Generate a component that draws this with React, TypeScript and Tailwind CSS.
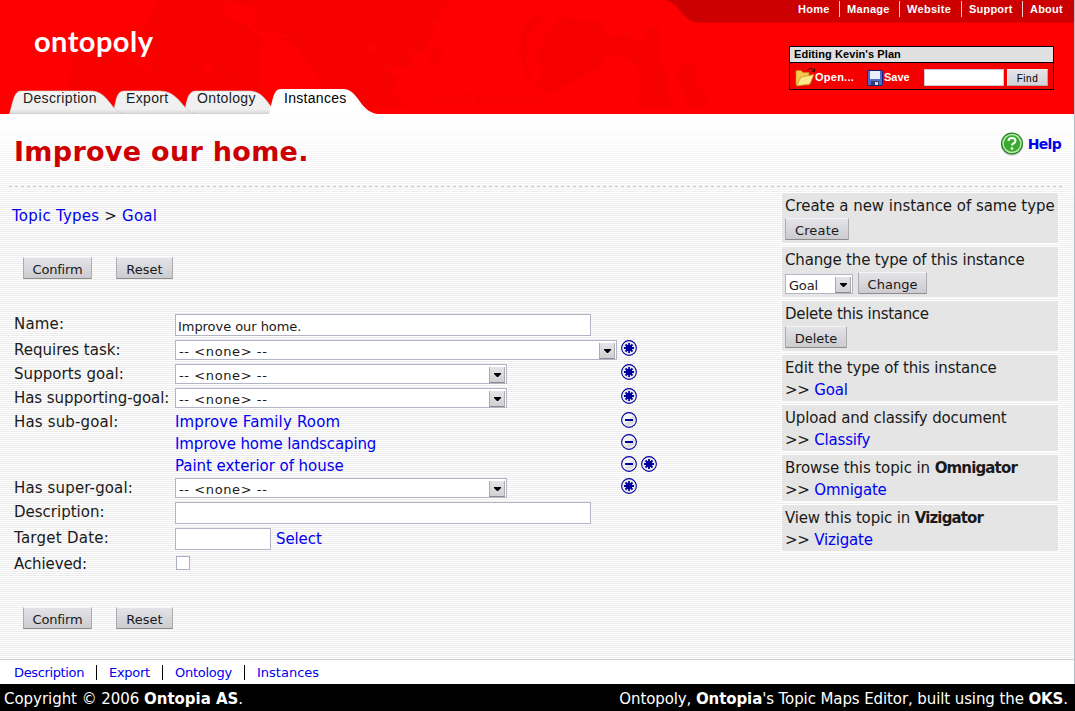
import React from "react";

const blue = "text-[#0000ee]";

function Star() {
  return (
    <svg width="16" height="16" viewBox="0 0 16 16" className="shrink-0 bg-white/60">
      <circle cx="8" cy="8" r="7.4" fill="#ececec" stroke="#00009c" strokeWidth="1.1" />
      <path d="M8 3v10M3 8h10M4.500 4.500l7 7M11.500 4.500l-7 7" stroke="#00009c" strokeWidth="1.8" />
      <circle cx="8" cy="8" r="3.2" fill="#00009c" />
    </svg>
  );
}

function Minus() {
  return (
    <svg width="16" height="16" viewBox="0 0 16 16" className="shrink-0">
      <circle cx="8" cy="8" r="7.4" fill="#f4f4f4" stroke="#00009c" strokeWidth="1.1" />
      <path d="M3.500 12.500L12.500 3.500A6.500 6.500 0 0 1 3.500 12.500Z" fill="#dddddd" />
      <rect x="4" y="7" width="8" height="2" fill="#00009c" />
    </svg>
  );
}

function Btn({ children, className }: { children: string; className: string }) {
  return (
    <button className={`shrink-0 h-[22px] border-x border-b border-t border-x-[#acacac] border-b-[#8c8c8c] border-t-[#f4f4f6] bg-linear-to-b from-[#e3e3e8] to-[#cbcbd0] text-[13px] leading-[22px] pt-px text-center whitespace-nowrap ${className}`}>
      {children}
    </button>
  );
}

function Select({ value, className }: { value: string; className: string }) {
  return (
    <div className={`flex h-5 shrink-0 items-start border border-[#b1b5c6] bg-white text-[13px] ${className}`}>
      <span className="grow pl-[3px] leading-[20px] pt-px">{value}</span>
      <span className="mt-[2px] mr-px flex h-4 w-4 items-center justify-center border-x border-b border-x-[#acacac] border-b-[#8c8c8c] bg-linear-to-b from-[#e3e3e8] to-[#d0d0d5]">
        <svg width="7" height="4" viewBox="0 0 7 4" className="mt-px"><path d="M0 0h7v1L4 4h-1L0 1z" fill="#000" /></svg>
      </span>
    </div>
  );
}

function Row({ label, h, children, track = "tracking-normal" }: { label: string; h: string; track?: string; children?: React.ReactNode }) {
  return (
    <div className={`flex items-start ${h}`}>
      <div className={`w-[161px] shrink-0 whitespace-nowrap leading-[20px] ${track}`}>{label}</div>
      {children}
    </div>
  );
}

function SelectRow({ label, h, w, value, track }: { label: string; h: string; w: string; value: string; track?: string }) {
  return (
    <Row label={label} h={h} track={track}>
      <div className="w-[446px] shrink-0"><Select value={value} className={`tracking-[.6px] ${w}`} /></div>
      <Star />
    </Row>
  );
}

function Buttons() {
  return (
    <div className="flex gap-6 pl-[23px]">
      <Btn className="w-[69px] tracking-[-.2px]">Confirm</Btn>
      <Btn className="w-[57px]">Reset</Btn>
    </div>
  );
}

function Panel({ title, bold, h, children, track = "tracking-[-.16px]" }: { title: string; bold?: string; h: string; track?: string; children: React.ReactNode }) {
  return (
    <div className={`w-[276px] bg-[#e5e5e5] pl-[3px] pt-[3px] outline outline-1 outline-white/70 ${h}`}>
      <div className={`whitespace-nowrap leading-[20px] ${track}`}>{title}{bold && <b className="tracking-[-.85px]">{bold}</b>}</div>
      {children}
    </div>
  );
}

function PanelLink({ children }: { children: string }) {
  return <div className="mt-[2px] leading-[20px] tracking-[-.2px]">&gt;&gt; <a className={blue}>{children}</a></div>;
}

function Header() {
  return (
    <header className="relative h-[114px] w-[1074px] bg-[#ff0000] font-['Liberation_Sans',sans-serif]">
      <svg className="absolute inset-0" width="1074" height="114" viewBox="0 0 1074 114">
        <g fill="#f60000">
          <path d="M158 0H225L223 14L243 25L250 18L247 29L262 37L260 48L259 90H67Q70 75 74 55L85 49L120 55L147 70L153 73L145 63L148 48L145 25z" />
          <path d="M230 0H449L447 6L438 12L440 18L433 22L434 30L430 38L427 50L418 54L411 50V70L399 66L384 68L400 78L390 92L409 107H350L322 88L298 50L288 42L285 34L270 33L250 28L258 20L256 7L230 3z" />
          <path d="M437 43L443 48L440 58L433 69L428 67L432 52z" />
          <path d="M540 13L544 20L534 27L531 34L527 38L527 48L526 58L530 75L530 86L527 82L522 60L516 53L521 46L522 28z" />
          <path d="M554 24L562 16L580 20L602 22L609 37L624 33L637 42L646 38L648 28L660 27L660 66L669 72L667 90L671 107H636L641 92L638 66L620 55L604 56L601 67L582 77L564 85L549 95L534 83L543 78L537 52L544 46L545 34z" />
          <path d="M682 62L692 61L698 72L696 84L702 90L709 107H692L682 96L681 93L686 89L675 81z" />
          <path d="M591 107Q596 102 601 107z" />
        </g>
        <g fill="none" stroke="#f10000">
          <path d="M513 0Q535 18 545 37M411 67Q443 82 469 108M224 13Q230 5 229 0M259 47Q280 37 300 38M211 68Q240 73 260 85" />
          <path d="M565 77Q575 87 590 88Q602 92 606 105M110 88Q110 65 120 56Q130 60 145 89M345 85Q344 64 372 49" strokeDasharray="4 3" />
        </g>
        <g fill="#fd0000"><circle cx="208" cy="68" r="5" /><circle cx="372" cy="48" r="4" /><path d="M300 52L310 65L318 75L323 85L310 78L301 68z" /></g>
        <g fontSize="11" fill="#fb0000"><text x="173" y="59" textLength="71">Knowledge</text><text x="338" y="37" textLength="75">Information</text></g>
        <g fill="#f40000"><text x="432" y="103" fontSize="14" textLength="109">Sea of Fragments</text><text x="545" y="68" fontSize="9" textLength="43" fill="#fc0000">Ontologies</text><text x="398" y="12" fontSize="9" fill="#fc0000">Unify</text></g>
        <path d="M664 0C681 2 681 22 699 22.500H1074V0z" fill="#cc0000" />
        <defs>
          <linearGradient id="tab" x1="0" y1="0" x2="0" y2="1"><stop offset="0" stopColor="#fafafa" /><stop offset=".15" stopColor="#f1f1f1" /><stop offset=".8" stopColor="#f0f0f0" /><stop offset="1" stopColor="#d5d5d5" /></linearGradient>
        </defs>
        <g stroke="#c9c9c9" strokeWidth=".6">
          <path d="M184 114C187 102 187 91 196 91H249C263 91 267 103 274 110L279 114z" fill="url(#tab)" />
          <path d="M113 114C116 102 116 91 124 91H160C175 91 180 103 188 110Q191 113 196 114z" fill="url(#tab)" />
          <path d="M9.500 114C13 102 14 91 21 91H91C104 91 109 103 116 110Q119 113 124 114z" fill="url(#tab)" />
        </g>
        <path d="M269 114C273 100 273 89 281 89H343C359 89 359 112 378 114z" fill="#fff" />
      </svg>
      <div className="absolute left-[34px] top-[22px] font-['Lato'] text-[29px] leading-[38px] font-bold tracking-[.45px] text-white">ontopoly</div>
      <nav className="absolute left-[23px] top-[90px] flex text-[14px] leading-[16px] text-[#1c1c1c]">
        <a className="w-[103px] tracking-[.35px]">Description</a>
        <a className="w-[71px] tracking-[.35px]">Export</a>
        <a className="w-[87px] tracking-[.35px]">Ontology</a>
        <a className="tracking-[.3px] text-black">Instances</a>
      </nav>
      <nav className="absolute left-[798px] top-[1px] flex text-[11px] leading-[16px] font-bold text-white">
        <a className="w-[41px] tracking-[.3px]">Home</a>
        <a className="w-[60px] border-l border-white/80 pl-[7px] tracking-[.3px]">Manage</a>
        <a className="w-[62px] border-l border-white/80 pl-[7px] tracking-[.3px]">Website</a>
        <a className="w-[61px] border-l border-white/80 pl-[7px] tracking-[.2px]">Support</a>
        <a className="border-l border-white/80 pl-[7px] tracking-[.2px]">About</a>
      </nav>
      <div className="absolute left-[789px] top-[46px] h-[44px] w-[265px] border border-black text-[11px] font-bold">
        <div className="h-4 border-b border-black bg-[#e0e0e0] pl-[4px] leading-[15px] tracking-[.08px] text-black">Editing Kevin's Plan</div>
        <div className="flex h-[26px] items-start bg-[#f50000] text-white">
          <svg className="ml-[5px] mt-[4px] shrink-0" width="20" height="21" viewBox="0 0 20 21">
            <path d="M1 4.500Q1 3.500 2 3.500H6L8 5.500H14V18H1z" fill="#f5c94d" stroke="#c08a1a" strokeWidth=".7" />
            <path d="M1.500 19L6 10L19 7.500L15 17z" fill="#ffe98a" stroke="#c08a1a" strokeWidth=".7" />
            <path d="M12.500 3Q16-.5 19 4M19.500 1.500V4.500H16.500" fill="none" stroke="#300" />
          </svg>
          <span className="w-[38px] shrink-0 leading-[28px] tracking-[.25px]">Open...</span>
          <svg className="ml-[14px] mt-[7px] shrink-0" width="16" height="16" viewBox="0 0 16 16">
            <rect x=".5" y=".5" width="15" height="15" rx="1" fill="#5069cf" stroke="#18206f" />
            <path d="M3 1H13V9H3z" fill="#e9eefb" /><path d="M4 11h8v4H4z" fill="#333d70" /><path d="M8 12h3v3H8z" fill="#d5d9e8" />
          </svg>
          <span className="ml-px w-[40px] shrink-0 leading-[28px]">Save</span>
          <input aria-label="Search" className="mt-[6px] h-[17px] w-[80px] shrink-0 border border-[#c6c6d8] bg-white" />
          <button className="ml-[3px] mt-[6px] h-[17px] w-[41px] shrink-0 border border-t-[#eee] border-r-[#acacac] border-b-[#acacac] border-l-[#eee] bg-linear-to-b from-[#e3e3e8] to-[#d2d2d8] pt-px text-[10px] leading-[16px] font-normal tracking-[.5px] text-black">Find</button>
        </div>
      </div>
    </header>
  );
}

export default function App() {
  return (
    <div className="flex h-[711px] w-[1075px] flex-col overflow-hidden bg-white font-['DejaVu_Sans',sans-serif] text-[15px] text-[#1a1a1a]">
      <div className="h-[684px] border-r border-[#b8bcca]">
        <Header />
        <div className="relative h-[545px] bg-[repeating-linear-gradient(180deg,#ffffff_0px,#ffffff_1px,#ececec_1px,#ececec_2px)]">
          <div className="absolute inset-x-0 top-0 h-[90px] bg-linear-to-b from-white to-transparent" />
          <div className="relative h-full">
            <div className="ml-[9px] mr-[10px] flex h-[72px] items-start justify-between">
              <h1 className="pl-[5px] pt-[21px] text-[27px] leading-[34px] font-bold tracking-[.3px] text-[#cc0000]">Improve our home.</h1>
              <a className="flex items-center gap-[4px] pt-[17px] pr-[3px] text-[14px] leading-[26px] font-bold tracking-[-.7px] text-[#0000ee]">
                <svg width="24" height="25" viewBox="0 0 24 25">
                  <circle cx="12" cy="12.800" r="11" fill="#ccc" /><circle cx="12" cy="11.500" r="11" fill="#257f25" />
                  <circle cx="12" cy="11.500" r="9" fill="#3aab2f" stroke="#b6ecaa" strokeWidth="1.500" />
                  <path d="M8.500 9Q8.500 6 12 6Q15.500 6 15.500 8.800Q15.500 10.500 13.500 11.500Q12 12.200 12 13.500" fill="none" stroke="#fff" strokeWidth="2" /><circle cx="12" cy="16.500" r="1.300" fill="#fff" />
                </svg>
                Help
              </a>
            </div>
            <div className="ml-[9px] mr-[10px] h-px bg-[repeating-linear-gradient(90deg,#cccccc_0px,#cccccc_3px,#ffffff_3px,#ffffff_6px)]" />
            <div className="flex">
              <main className="w-[782px]">
                <div className="h-[70px] pl-[12px] pt-[19px] leading-[20px] tracking-[.23px]"><a className={blue}>Topic Types</a> &gt; <a className={blue}>Goal</a></div>
                <Buttons />
                <div className="pl-[14px] pt-[35px]">
                  <Row label="Name:" h="h-[26px]" track="tracking-[.2px]"><input aria-label="Name" defaultValue="Improve our home." className="h-[22px] w-[416px] border border-[#b1b5c6] bg-white px-[2px] pt-[2px] text-[13px] tracking-[-.05px]" /></Row>
                  <SelectRow label="Requires task:" h="h-6" w="w-[442px]" value="-- <none> --" />
                  <SelectRow label="Supports goal:" track="tracking-[.07px]" h="h-6" w="w-[332px]" value="-- <none> --" />
                  <SelectRow label="Has supporting-goal:" track="tracking-[-.05px]" h="h-6" w="w-[332px]" value="-- <none> --" />
                  <Row label="Has sub-goal:" h="h-[22px]" track="tracking-[.16px]"><a className={`w-[446px] leading-[20px] tracking-[.16px] ${blue}`}>Improve Family Room</a><Minus /></Row>
                  <Row label="" h="h-[22px]"><a className={`w-[446px] leading-[20px] tracking-[-.12px] ${blue}`}>Improve home landscaping</a><Minus /></Row>
                  <Row label="" h="h-[22px]"><a className={`w-[446px] leading-[20px] tracking-[-.05px] ${blue}`}>Paint exterior of house</a><div className="flex gap-1"><Minus /><Star /></div></Row>
                  <SelectRow label="Has super-goal:" track="tracking-[.14px]" h="h-6" w="w-[332px]" value="-- <none> --" />
                  <Row label="Description:" h="h-[26px]"><input aria-label="Description" className="h-[22px] w-[416px] border border-[#b1b5c6] bg-white" /></Row>
                  <Row label="Target Date:" h="h-[26px]" track="tracking-[.25px]"><input aria-label="Target Date" className="h-[22px] w-[96px] border border-[#b1b5c6] bg-white" /><a className={`ml-[5px] tracking-[-.1px] ${blue}`}>Select</a></Row>
                  <Row label="Achieved:" h="h-[42px]" track="tracking-[-.1px]"><div className="ml-px mt-[2px] h-[14px] w-[14px] border border-[#a9b0c4] bg-white" /></Row>
                </div>
                <div className="pt-[11px]"><Buttons /></div>
              </main>
              <aside className="flex flex-col gap-1 pt-[6px]">
                <Panel title="Create a new instance of same type" track="tracking-[-.04px]" h="h-[50px]"><Btn className="w-[64px] block mt-[2px] tracking-[.15px]">Create</Btn></Panel>
                <Panel title="Change the type of this instance" h="h-[50px]"><div className="mt-[2px] flex gap-[5px]"><Select value="Goal" className="w-[68px] mt-[2px] tracking-[-.2px]" /><Btn className="w-[69px]">Change</Btn></div></Panel>
                <Panel title="Delete this instance" track="tracking-[-.3px]" h="h-[50px]"><Btn className="w-[62px] block mt-[2px]">Delete</Btn></Panel>
                <Panel title="Edit the type of this instance" h="h-[46px]"><PanelLink>Goal</PanelLink></Panel>
                <Panel title="Upload and classify document" h="h-[46px]"><PanelLink>Classify</PanelLink></Panel>
                <Panel title="Browse this topic in " bold="Omnigator" track="tracking-[-.1px]" h="h-[46px]"><PanelLink>Omnigate</PanelLink></Panel>
                <Panel title="View this topic in " bold="Vizigator" h="h-[46px]"><PanelLink>Vizigate</PanelLink></Panel>
              </aside>
            </div>
          </div>
        </div>
        <nav className="flex h-[25px] items-start border-t border-[#cccccc] bg-white pl-[14px] pt-[5px] text-[13px] leading-[15px] text-[#0000ee]">
          <a className="w-[82px] tracking-[-.36px]">Description</a>
          <a className="w-[66px] border-l border-black pl-[12px] tracking-[-.3px]">Export</a>
          <a className="w-[82px] border-l border-black pl-[12px] tracking-[-.28px]">Ontology</a>
          <a className="border-l border-black pl-[12px]">Instances</a>
        </nav>
      </div>
      <footer className="flex h-[27px] items-center justify-between bg-black pl-1 pr-[7px] pt-[3px] whitespace-nowrap text-white">
        <span className="tracking-[-.04px]">Copyright © 2006 <b>Ontopia AS</b>.</span>
        <span className="tracking-[-.1px]">Ontopoly, <b>Ontopia</b>'s Topic Maps Editor, built using the <b>OKS</b>.</span>
      </footer>
    </div>
  );
}
